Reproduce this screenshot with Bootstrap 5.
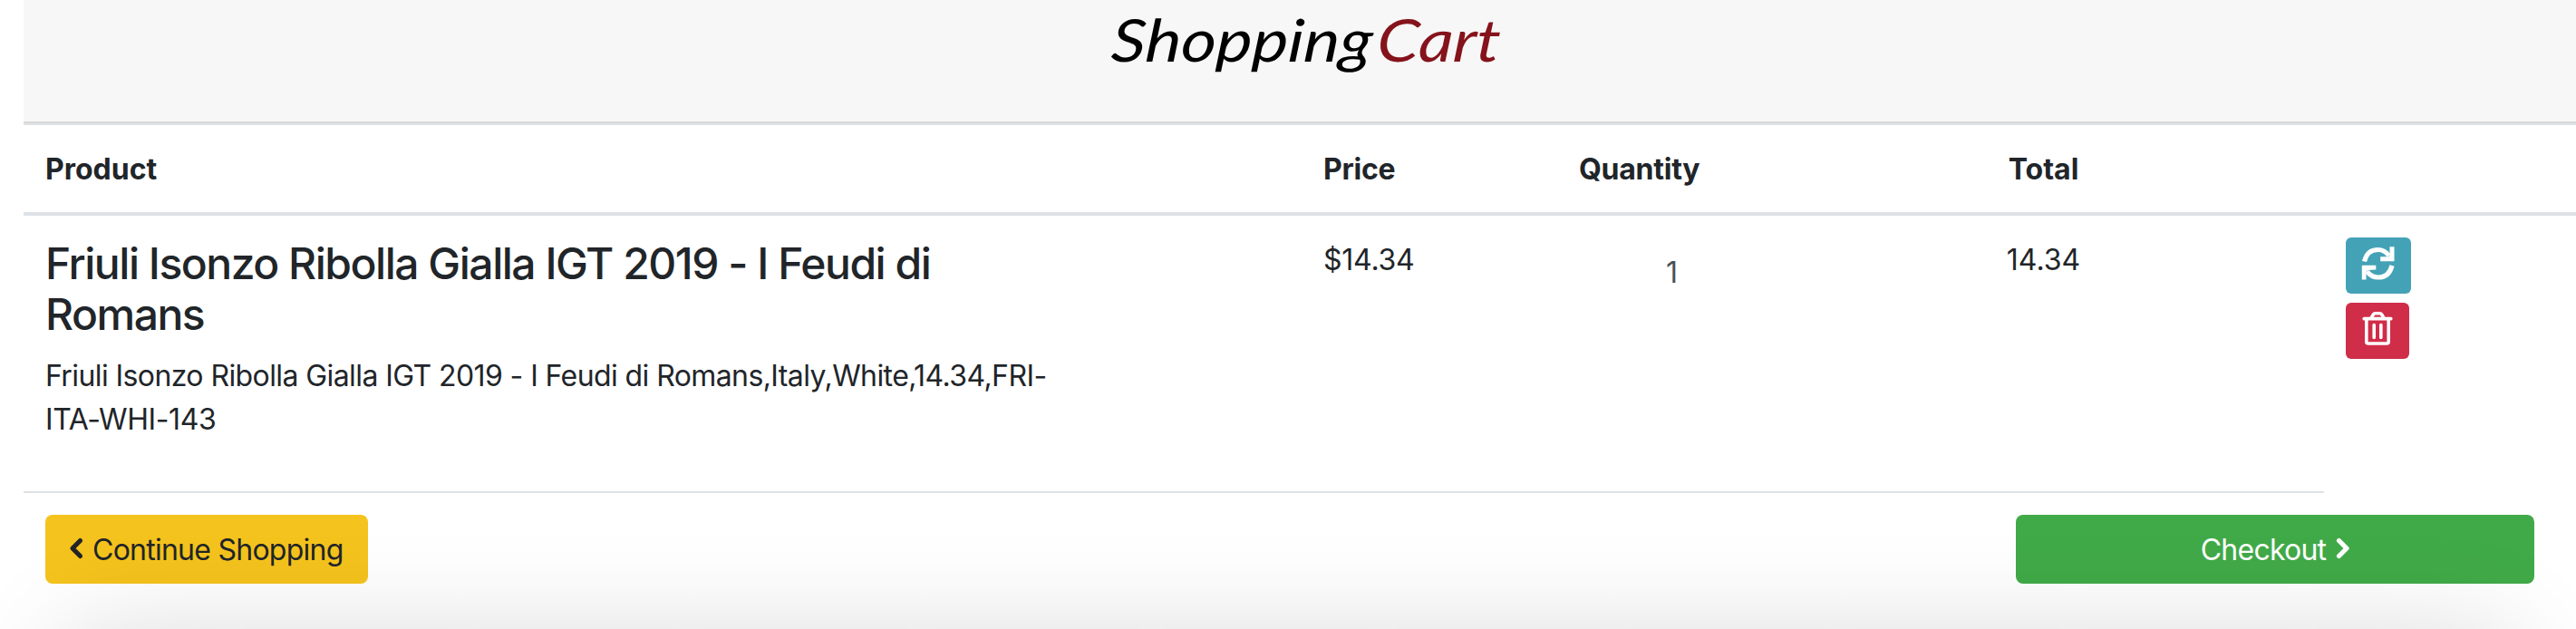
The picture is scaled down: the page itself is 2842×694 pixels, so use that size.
<!DOCTYPE html>
<html lang="en">
<head>
<meta charset="utf-8">
<title>Shopping Cart</title>
<link href="https://cdn.jsdelivr.net/npm/bootstrap@5.3.0/dist/css/bootstrap.min.css" rel="stylesheet">
<style>
  html { overflow: hidden; }
  body { font-family: Inter, "Liberation Sans", sans-serif; font-size: 32px; line-height: 48px; color: #212529; height: 694px; overflow: hidden; position: relative; }
  .cart-page { padding-left: 26px; height: 694px; overflow: hidden; }
  .cart-head { height: 136px; background: #f7f7f7; border-bottom: 2px solid #d8d8d8; }
  .cart-logo { display: block; margin-left: 1174px; width: 480px; height: 130px; font-family: Lato, sans-serif; font-style: italic; }
  .cart-grid { display: grid; grid-template-columns: 1411px 282px 226px 619px 1fr; }
  .cell { padding: 25px 24px 23px; }
  .head-row { border-top: 2px solid #dee2e6; border-bottom: 4px solid #dee2e6; font-weight: 700; height: 102px; }
  .item-row { height: 304px; }
  .product-name { font-size: 48px; line-height: 56px; font-weight: 500; letter-spacing: -1.48px; margin-bottom: 16px; }
  .product-text { letter-spacing: -.59px; }
  .product-code { letter-spacing: -.4px; }
  .qty { padding: 14px 0 0 95px; color: #495057; }
  .money { letter-spacing: -.25px; padding-left: 23px; }
  .rule { width: 2538px; height: 2px; background: #dee2e6; }
  .tools, .actions { padding: 24px; }
  .tool-btn { height: 62px; border: 0; border-radius: 6px; padding: 8px 0 12px; line-height: 1; display: block; text-align: center; }
  .tool-btn svg { display: block; margin: 0 auto; }
  .btn-refresh, .btn-refresh:hover { width: 72px; background: #44a2b7; }
  .btn-trash, .btn-trash:hover { width: 70px; background: #d02d49; margin-top: 10px; }
  .cart-btn { height: 76px; border: 0; border-radius: 8px; font-size: 32px; line-height: 48px; padding: 15px 26px 13px; letter-spacing: -.75px; }
  .btn-continue, .btn-continue:hover { width: 356px; background: #f5c31d; color: #212529; }
  .btn-checkout, .btn-checkout:hover { width: 572px; background: #41aa48; color: #fff; margin-right: 46px; }
  .edge-clip { position: absolute; inset: 0; overflow: hidden; pointer-events: none; }
  .edge-shadow { position: absolute; left: 70px; right: 70px; top: 704px; height: 200px; box-shadow: 0 0 120px rgba(0,0,0,.155); }
</style>
</head>
<body>
<main class="cart-page">
  <header class="cart-head">
    <svg class="cart-logo" viewBox="0 0 480 130" role="img" aria-label="Shopping Cart">
      <g font-size="65">
        <text transform="translate(25 68) skewX(-4)" textLength="288" lengthAdjust="spacingAndGlyphs" fill="#000">Shopping</text>
        <text transform="translate(318 68) skewX(-4)" textLength="136" lengthAdjust="spacingAndGlyphs" fill="#85131c">Cart</text>
      </g>
    </svg>
  </header>
  <section class="cart-grid head-row">
    <div class="cell">Product</div>
    <div class="cell money">Price</div>
    <div class="cell money">Quantity</div>
    <div class="cell text-center">Total</div>
    <div></div>
  </section>
  <section class="cart-grid item-row">
    <div class="cell">
      <h4 class="product-name">Friuli Isonzo Ribolla Gialla IGT 2019 - I Feudi di<br>Romans</h4>
      <p class="product-text mb-0">Friuli Isonzo Ribolla Gialla IGT 2019 - I Feudi di Romans,Italy,White,14.34,FRI-<br><span class="product-code">ITA-WHI-143</span></p>
    </div>
    <div class="cell money">$14.34</div>
    <div class="cell"><div class="qty">1</div></div>
    <div class="cell text-center">14.34</div>
    <div class="tools">
      <button class="btn tool-btn btn-refresh" aria-label="Update">
        <svg width="38" height="42" viewBox="0 0 38 42" fill="none">
          <path d="M3.5 18.5C5.5 10 11 5.5 18.5 5.5C24 5.5 28 8.3 30.8 12.2M34 23C32 31 27 36 19 36C13.5 36 9 33.2 6.5 29.5" stroke="#fff" stroke-width="5.2"/>
          <path d="M31.5 2.2h5v15.5q0 .5-.5.5H21.2v-5h9l1.3-1zM.8 23.2q0-.5.5-.5h15v4.8l-8 .4-2.8 2v8.5H.8z" fill="#fff"/>
        </svg>
      </button>
      <button class="btn tool-btn btn-trash" aria-label="Remove">
        <svg width="34" height="42" viewBox="0 0 34 42" fill="none" stroke="#fff">
          <path d="M2.3 9.7h29.4" stroke-width="3.8" stroke-linecap="round"/>
          <path d="M10 9l2.3-4q.8-1.2 2.2-1.2h5q1.4 0 2.2 1.2L24 9M4.8 10v25q0 2 2 2h20.4q2 0 2-2V10" stroke-width="3.6"/>
          <path d="M13.2 16.5v14M20.8 16.5v14" stroke-width="3.6" stroke-linecap="round"/>
        </svg>
      </button>
    </div>
  </section>
  <div class="rule"></div>
  <footer class="actions d-flex justify-content-between pe-0">
    <button class="btn cart-btn btn-continue d-flex text-nowrap"><svg width="18" height="30" viewBox="0 0 18 30" class="flex-shrink-0 mt-2 me-2"><path d="M12.5 5.5L4 14l8.5 8.5" fill="none" stroke="#212529" stroke-width="5.2" stroke-linecap="round" stroke-linejoin="round"/></svg>Continue Shopping</button>
    <button class="btn cart-btn btn-checkout d-flex justify-content-center text-nowrap">Checkout<svg width="18" height="30" viewBox="0 0 18 30" class="flex-shrink-0 mt-2 ms-2"><path d="M6.5 5.5L15 14l-8.5 8.5" fill="none" stroke="#fff" stroke-width="5.2" stroke-linecap="round" stroke-linejoin="round"/></svg></button>
  </footer>
</main>
<div class="edge-clip"><div class="edge-shadow"></div></div>
<script src="https://cdn.jsdelivr.net/npm/bootstrap@5.3.0/dist/js/bootstrap.bundle.min.js"></script>
</body>
</html>
